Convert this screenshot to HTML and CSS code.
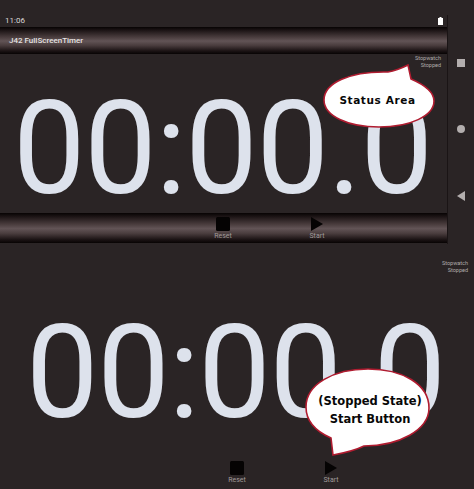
FILE: index.html
```html
<!DOCTYPE html>
<html lang="en">
<head>
<meta charset="utf-8">
<title>J42 FullScreenTimer</title>
<link rel="stylesheet" href="styles.css">
</head>
<body>
<section class="device">
  <div class="screen">
    <div class="statusbar">
      <span>11:06</span>
      <svg class="battery" width="5" height="8" viewBox="0 0 5 8"><path d="M1.5 0h2v1H5v7H0V1h1.500z" fill="#fff"/></svg>
    </div>
    <header class="bar toolbar">J42 FullScreenTimer</header>
    <div class="content">
      <div class="state"><span>Stopwatch</span><span>Stopped</span></div>
      <div class="time">00:00.0</div>
    </div>
    <footer class="bar controls">
      <div class="btn"><svg width="14" height="14" viewBox="0 0 14 14"><rect width="14" height="14" rx="1.500" fill="#050303"/></svg><span>Reset</span></div>
      <div class="btn"><svg width="14" height="14" viewBox="0 0 14 14"><path d="M1 0l12 7-12 7z" fill="#050303"/></svg><span>Start</span></div>
    </footer>
  </div>
  <nav class="softkeys">
    <i class="key-square"></i>
    <i class="key-circle"></i>
    <svg class="key-back" width="8" height="10" viewBox="0 0 8 10"><path d="M8 0v10L0 5z" fill="#b3aeae"/></svg>
  </nav>
</section>
<section class="full">
  <div class="state"><span>Stopwatch</span><span>Stopped</span></div>
  <div class="time">00:00.0</div>
  <div class="controls plain">
    <div class="btn"><svg width="14" height="14" viewBox="0 0 14 14"><rect width="14" height="14" rx="1.500" fill="#050303"/></svg><span>Reset</span></div>
    <div class="btn"><svg width="14" height="14" viewBox="0 0 14 14"><path d="M1 0l12 7-12 7z" fill="#050303"/></svg><span>Start</span></div>
  </div>
</section>
<div class="bubble bubble-status">
  <svg width="115" height="66" viewBox="0 0 115 66"><path d="M66 8C72 7 80 4 86 1L89 15C103 21 112 29 112 37C112 52 88 63 57 63C26 63 2 52 2 36C2 19 28 7 66 8Z" fill="#fff" stroke="#b01c30" stroke-width="1.6"/></svg>
  <span>Status Area</span>
</div>
<div class="bubble bubble-start">
  <svg width="128" height="92" viewBox="0 0 128 92"><path d="M64 2C98 2 125 17 125 41C125 63 95 79 60 79C52 83 40 86 29 88L27 71C11 64 2 53 2 40C2 17 30 2 64 2Z" fill="#fff" stroke="#b01c30" stroke-width="1.6"/></svg>
  <span>(Stopped State)<br>Start Button</span>
</div>
</body>
</html>
```
FILE: styles.css
```css
html, body {
  margin: 0;
  padding: 0;
}
body {
  position: relative;
  width: 474px;
  height: 489px;
  overflow: hidden;
  background: #2a2425;
  font-family: Roboto, "Liberation Sans", sans-serif;
}
.device {
  display: flex;
  height: 244px;
}
.screen {
  display: flex;
  flex-direction: column;
  width: 447px;
  height: 243px;
}
.statusbar {
  display: flex;
  flex: none;
  justify-content: space-between;
  align-items: center;
  height: 27px;
  padding: 14px 4px 0 5px;
  box-sizing: border-box;
  color: #dcd8d8;
  font-size: 8px;
}
.battery {
  display: block;
}
.bar {
  background: linear-gradient(#070303 0%, #1c1415 12%, #4a3d3e 38%, #625456 52%, #4a3d3e 68%, #1c1415 88%, #070303 100%);
}
.toolbar {
  display: flex;
  flex: none;
  align-items: center;
  height: 27px;
  padding-left: 9px;
  color: #e6e2e2;
  font-size: 8px;
  font-weight: 500;
}
.content {
  display: flex;
  flex-direction: column;
  flex: 1;
  min-height: 0;
}
.state {
  display: flex;
  flex: none;
  flex-direction: column;
  align-items: flex-end;
  color: #b0abab;
  font-size: 5.500px;
  line-height: 7px;
}
.content .state {
  padding: 1px 6px 0 0;
  height: 14px;
}
.time {
  flex: none;
  color: #dde2ec;
  font-size: 129px;
  line-height: 120px;
  letter-spacing: -1.300px;
  white-space: nowrap;
}
.content .time {
  margin-top: 20px;
  padding-left: 13px;
}
.controls {
  display: flex;
  flex: none;
  height: 30px;
  box-sizing: border-box;
  padding: 4px 0 0 212px;
  gap: 72px;
}
.btn {
  display: flex;
  flex: none;
  flex-direction: column;
  align-items: center;
  width: 22px;
  color: #a09a9a;
  font-size: 7px;
  line-height: 8px;
}
.btn svg {
  display: block;
  flex: none;
  margin-bottom: 1px;
}
.softkeys {
  flex: 1;
  display: flex;
  flex-direction: column;
  align-items: center;
  gap: 58px;
  height: 229px;
  margin-top: 15px;
  padding-top: 44px;
  border-left: 1px solid #1a1415;
  box-sizing: border-box;
}
.key-square,
.key-circle {
  display: block;
  flex: none;
  width: 8px;
  height: 8px;
  background: #b3aeae;
}
.key-circle {
  border-radius: 50%;
}
.key-back {
  display: block;
  flex: none;
}
.full {
  display: flex;
  flex-direction: column;
  height: 245px;
}
.full .state {
  padding: 16px 6px 0 0;
  height: 14px;
}
.full .time {
  margin-top: 39px;
  padding-left: 26px;
}
.controls.plain {
  padding: 28px 0 0 226px;
  height: auto;
}
.bubble {
  position: absolute;
  display: flex;
  align-items: center;
  justify-content: center;
  box-sizing: border-box;
  color: #080808;
  font-family: "DejaVu Sans", sans-serif;
  font-weight: 700;
  text-align: center;
}
.bubble svg {
  position: absolute;
  left: 0;
  top: 0;
}
.bubble span {
  position: relative;
}
.bubble-status {
  left: 322px;
  top: 64px;
  width: 115px;
  height: 66px;
  padding: 5px 4px 0 0;
  font-size: 10.500px;
  letter-spacing: 0.600px;
}
.bubble-start {
  left: 304px;
  top: 367px;
  width: 128px;
  height: 92px;
  padding: 0 0 7px 4px;
  font-size: 11.500px;
  line-height: 18px;
}
```
